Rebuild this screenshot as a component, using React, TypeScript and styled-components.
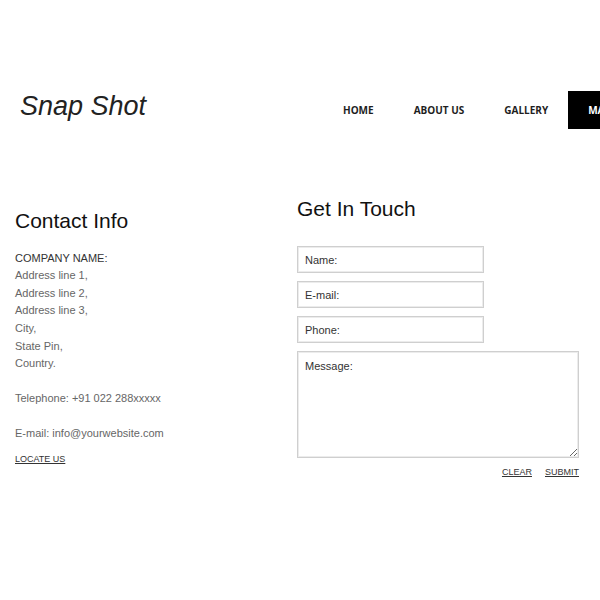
import React from "react";
import styled, { createGlobalStyle } from "styled-components";

const Global = createGlobalStyle`
  html, body {
    margin: 0;
    padding: 0;
    background: #ffffff;
    overflow-x: hidden;
  }
  body {
    font-family: "Liberation Sans", Arial, sans-serif;
  }
  * { box-sizing: border-box; }
`;

const Page = styled.div`
  width: 600px;
  min-height: 600px;
`;

const Header = styled.header`
  display: flex;
  align-items: flex-start;
  padding: 91px 0 0 20px;
  height: 129px;
`;

const Logo = styled.h1`
  margin: 0;
  width: 303px;
  flex-shrink: 0;
  font-family: "Liberation Sans", Arial, sans-serif;
  font-style: italic;
  font-weight: 400;
  font-size: 27px;
  line-height: 30px;
  color: #222;
`;

const Nav = styled.nav`
  display: flex;
  flex-shrink: 0;
  white-space: nowrap;
`;

const NavItem = styled.a<{ $active?: boolean }>`
  display: block;
  height: 38px;
  line-height: 39px;
  padding: 0 20px;
  font-family: "Open Sans", sans-serif;
  font-weight: 700;
  font-size: 10px;
  text-transform: uppercase;
  text-decoration: none;
  color: ${(p) => (p.$active ? "#ffffff" : "#1e1e1e")};
  background: ${(p) => (p.$active ? "#000000" : "transparent")};
`;

const Main = styled.main`
  display: grid;
  grid-template-columns: 282px 282px;
  padding: 0 15px;
`;

const Column = styled.section<{ $top: number }>`
  padding-top: ${(p) => p.$top}px;
`;

const Heading = styled.h2`
  margin: 0;
  font-family: "Liberation Sans", Arial, sans-serif;
  font-weight: 400;
  font-size: 21px;
  line-height: 1.2;
  color: #111;
`;

const Info = styled.p`
  margin: 0 0 17.4px;
  font-size: 11px;
  line-height: 1.6;
  color: #666;
  &:first-of-type {
    margin-top: 16.5px;
  }
`;

const Company = styled.span`
  color: #333;
`;

const SmallLink = styled.a`
  font-size: 9px;
  line-height: 17.6px;
  color: #333;
  text-decoration: underline;
  text-transform: uppercase;
`;

const LocateRow = styled.div`
  margin-top: -12.4px;
  line-height: 17.6px;
`;

const Form = styled.form`
  display: flex;
  flex-direction: column;
  gap: 8px;
  margin-top: 25px;
`;

const Field = styled.input`
  width: 187px;
  height: 27px;
  padding: 0 7px;
  border: 1px solid #cfcfcf;
  box-shadow: inset 0 0 0 1px #ececec;
  outline: none;
  font-family: "Liberation Sans", Arial, sans-serif;
  font-size: 11px;
  color: #333;
  &::placeholder {
    color: #333;
    opacity: 1;
  }
`;

const Message = styled.textarea`
  width: 282px;
  height: 107px;
  padding: 8px 7px;
  border: 1px solid #cfcfcf;
  box-shadow: inset 0 0 0 1px #ececec;
  outline: none;
  font-family: "Liberation Sans", Arial, sans-serif;
  font-size: 11px;
  color: #333;
  display: block;
  &::placeholder {
    color: #333;
    opacity: 1;
  }
`;

const Actions = styled.div`
  display: flex;
  justify-content: flex-end;
  gap: 13px;
  margin-top: -2px;
`;

export default function App() {
  return (
    <Page>
      <Global />
      <Header>
        <Logo>Snap Shot</Logo>
        <Nav>
          <NavItem href="#">Home</NavItem>
          <NavItem href="#">About Us</NavItem>
          <NavItem href="#">Gallery</NavItem>
          <NavItem href="#" $active>
            Mail Us
          </NavItem>
        </Nav>
      </Header>
      <Main>
        <Column $top={79}>
          <Heading>Contact Info</Heading>
          <Info>
            <Company>COMPANY NAME:</Company>
            <br />
            Address line 1,
            <br />
            Address line 2,
            <br />
            Address line 3,
            <br />
            City,
            <br />
            State Pin,
            <br />
            Country.
          </Info>
          <Info>Telephone: +91 022 288xxxxx</Info>
          <Info>E-mail: info@yourwebsite.com</Info>
          <LocateRow>
            <SmallLink href="#">Locate Us</SmallLink>
          </LocateRow>
        </Column>
        <Column $top={67}>
          <Heading>Get In Touch</Heading>
          <Form onSubmit={(e) => e.preventDefault()}>
            <Field type="text" placeholder="Name:" />
            <Field type="text" placeholder="E-mail:" />
            <Field type="text" placeholder="Phone:" />
            <Message placeholder="Message:" />
            <Actions>
              <SmallLink href="#">Clear</SmallLink>
              <SmallLink href="#">Submit</SmallLink>
            </Actions>
          </Form>
        </Column>
      </Main>
    </Page>
  );
}
